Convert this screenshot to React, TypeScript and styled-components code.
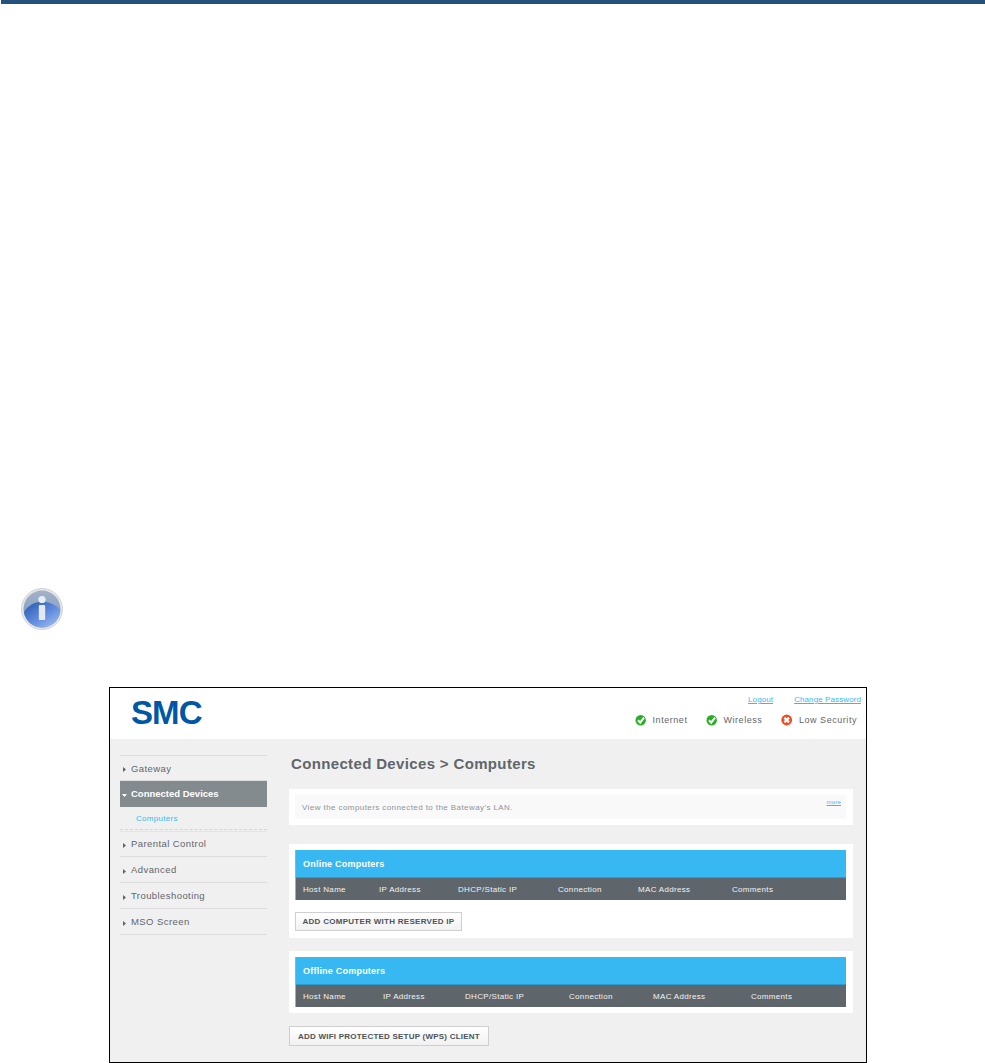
import React from "react";
import styled, { createGlobalStyle } from "styled-components";

const Global = createGlobalStyle`
  html, body { margin: 0; padding: 0; background: #fff; }
  body { font-family: "Liberation Sans", Arial, sans-serif; }
  * { box-sizing: border-box; }
`;

const Page = styled.div`
  width: 985px;
  height: 1063px;
  overflow: hidden;
  background: #fff;
`;
const TopRule = styled.div`
  height: 4px;
  margin-left: 1px;
  background: #25527d;
`;
const NoteIcon = styled.svg`
  display: block;
  width: 44px;
  height: 44px;
  margin: 583px 0 0 20px;
`;
const Frame = styled.div`
  width: 758px;
  height: 376px;
  margin: 56px 0 0 109px;
  border: 1px solid #000;
  background: #f0f0f0;
`;
const Header = styled.header`
  height: 51px;
  background: #fff;
  display: flex;
  justify-content: space-between;
`;
const Logo = styled.div`
  margin: 7px 0 0 21px;
  font-size: 33px;
  line-height: 36px;
  font-weight: 700;
  color: #0057a5;
  letter-spacing: -0.9px;
`;
const HeaderRight = styled.div`
  width: 260px;
  padding: 7px 5px 0 0;
  display: flex;
  flex-direction: column;
  align-items: flex-end;
`;
const Links = styled.div`
  display: flex;
  gap: 21px;
  font-size: 8px;
  line-height: 10px;
  letter-spacing: 0.1px;
`;
const A = styled.a`
  color: #38b8f2;
  text-decoration: underline;
`;
const Statuses = styled.div`
  display: flex;
  margin-top: 9px;
  padding-right: 4px;
  font-size: 9px;
  line-height: 12px;
  letter-spacing: 0.55px;
  color: #5f666b;
  white-space: nowrap;
`;
const Status = styled.div<{ $left: number }>`
  display: flex;
  align-items: center;
  gap: 5.5px;
  margin-left: ${(p) => p.$left}px;
`;
const Body = styled.div`
  display: flex;
`;
const Side = styled.nav`
  width: 147px;
  margin: 16px 0 0 10px;
  border-top: 1px solid #dcdcdc;
  flex: none;
`;
const NavItem = styled.div<{ $active?: boolean; $first?: boolean; $afterSub?: boolean }>`
  height: ${(p) => (p.$first ? "25px" : "26px")};
  display: flex;
  align-items: center;
  padding-left: 2px;
  gap: 4px;
  font-size: 9.5px;
  letter-spacing: ${(p) => (p.$active ? "0" : "0.42px")};
  font-weight: ${(p) => (p.$active ? 700 : 400)};
  color: ${(p) => (p.$active ? "#fff" : "#5f666b")};
  background: ${(p) => (p.$active ? "#848b8f" : "transparent")};
  border-bottom: 1px solid ${(p) => (p.$active ? "transparent" : "#dcdcdc")};
  ${(p) => (p.$afterSub ? "margin-top: 1px; box-shadow: inset 0 1px #e4e4e4;" : "")}
`;
const Arrow = styled.svg`
  width: 5px;
  height: 7px;
  flex: none;
  margin-top: 3px;
`;
const SubItem = styled.div`
  height: 23px;
  padding: 7px 0 0 16px;
  font-size: 8px;
  line-height: 10px;
  letter-spacing: 0.3px;
  color: #38b8f2;
  border-bottom: 1px dashed #d5d5d5;
`;
const Main = styled.main`
  margin-left: 22px;
  width: 565px;
  flex: none;
`;
const Title = styled.h1`
  margin: 15px 0 0 2px;
  font-size: 15px;
  line-height: 20px;
  font-weight: 700;
  letter-spacing: 0.35px;
  color: #5f666b;
`;
const Card = styled.section<{ $top: number; $bottom?: number }>`
  margin-top: ${(p) => p.$top}px;
  width: 564px;
  background: #fff;
  padding: 6px 7px ${(p) => p.$bottom ?? 6}px 6px;
`;
const Intro = styled.div`
  height: 24px;
  padding: 0 7px;
  display: flex;
  align-items: center;
  justify-content: space-between;
  background: #f9f9f9;
  font-size: 8px;
  letter-spacing: 0.42px;
  color: #8f9497;
`;
const More = styled(A)`
  align-self: flex-start;
  margin: 2px -2px 0 0;
  font-size: 6px;
  line-height: 10px;
  letter-spacing: 0.2px;
`;
const TableBox = styled.div`
  border-left: 1px solid #a9adb0;
`;
const TableTitle = styled.div`
  height: 28px;
  padding-left: 7px;
  display: flex;
  align-items: center;
  font-size: 9px;
  font-weight: 700;
  letter-spacing: 0.22px;
  color: #fff;
  background: #38b8f2;
  border-bottom: 1px solid #2e9bcc;
`;
const HeadRow = styled.div<{ $cols: string }>`
  height: 22px;
  padding-left: 7px;
  display: grid;
  grid-template-columns: ${(p) => p.$cols};
  align-items: center;
  font-size: 8px;
  letter-spacing: 0.32px;
  color: #f1f2f2;
  background: #5f666b;
`;
const Btn = styled.div<{ $w: number; $h: number; $mt: number; $ls: number }>`
  width: ${(p) => p.$w}px;
  height: ${(p) => p.$h}px;
  margin-top: ${(p) => p.$mt}px;
  display: flex;
  align-items: center;
  justify-content: center;
  font-size: 8px;
  font-weight: 700;
  letter-spacing: ${(p) => p.$ls}px;
  color: #4d5356;
  white-space: nowrap;
  border: 1px solid #cfcfcf;
  background: linear-gradient(#fff, #f1f1f1);
`;

const Check = () => (
  <svg width="12" height="12" viewBox="0 0 12 12">
    <circle cx="5.7" cy="6.3" r="5.2" fill="#27b024" />
    <path d="M3 6.2 5.2 8.6 9 3.6" fill="none" stroke="#fff" strokeWidth="2" />
  </svg>
);
const Cross = () => (
  <svg width="12" height="12" viewBox="0 0 12 12">
    <circle cx="5.7" cy="6" r="5.4" fill="#ef4b23" />
    <path d="M3.4 3.7 8 8.3M8 3.7 3.4 8.3" fill="none" stroke="#fff" strokeWidth="2.4" />
  </svg>
);
const Right = () => (
  <Arrow viewBox="0 0 5 7"><path d="M1 1 4 3.5 1 6z" fill="#5f666b" /></Arrow>
);
const Down = () => (
  <Arrow viewBox="0 0 5 7"><path d="M0 2 5 2 2.5 5z" fill="#fff" /></Arrow>
);

const Columns = ["Host Name", "IP Address", "DHCP/Static IP", "Connection", "MAC Address", "Comments"];

const Head = ({ title, cols }: { title: string; cols: string }) => (
  <TableBox>
    <TableTitle>{title}</TableTitle>
    <HeadRow $cols={cols}>
      {Columns.map((c) => <span key={c}>{c}</span>)}
    </HeadRow>
  </TableBox>
);

export default function App() {
  return (
    <Page>
      <Global />
      <TopRule />
      <NoteIcon viewBox="0 0 44 44">
        <defs>
          <linearGradient id="ng" x1="0" y1="0" x2="0" y2="1">
            <stop offset="0" stopColor="#a3b3c8" />
            <stop offset="0.55" stopColor="#8aa3c6" />
            <stop offset="1" stopColor="#4a78c4" />
          </linearGradient>
          <linearGradient id="nb" x1="0" y1="0.2" x2="0.7" y2="1">
            <stop offset="0" stopColor="#2f62b8" />
            <stop offset="0.55" stopColor="#5f8bdc" />
            <stop offset="1" stopColor="#94b4ee" />
          </linearGradient>
          <filter id="soft"><feGaussianBlur stdDeviation="0.5" /></filter>
        </defs>
        <g filter="url(#soft)">
          <circle cx="22" cy="22" r="20.5" fill="#e6e6e8" stroke="#d2d4d8" />
          <circle cx="22" cy="22" r="18.5" fill="url(#ng)" />
          <path d="M4 25C9 17 17 14 26 15 32 16 37 19 40.4 23 40 33 32 40.5 22 40.5 12 40.5 5 33 4 25z" fill="url(#nb)" />
          <circle cx="22" cy="12.5" r="3.6" fill="#e9edf4" />
          <rect x="18.8" y="18" width="6.4" height="15" rx="1" fill="#e4e8f0" />
        </g>
      </NoteIcon>
      <Frame>
        <Header>
          <Logo>SMC</Logo>
          <HeaderRight>
            <Links>
              <A>Logout</A>
              <A>Change Password</A>
            </Links>
            <Statuses>
              <Status $left={0}><Check />Internet</Status>
              <Status $left={18.5}><Check />Wireless</Status>
              <Status $left={19}><Cross />Low Security</Status>
            </Statuses>
          </HeaderRight>
        </Header>
        <Body>
          <Side>
            <NavItem $first><Right />Gateway</NavItem>
            <NavItem $active><Down />Connected Devices</NavItem>
            <SubItem>Computers</SubItem>
            <NavItem $afterSub><Right />Parental Control</NavItem>
            <NavItem><Right />Advanced</NavItem>
            <NavItem><Right />Troubleshooting</NavItem>
            <NavItem><Right />MSO Screen</NavItem>
          </Side>
          <Main>
            <Title>Connected Devices &gt; Computers</Title>
            <Card $top={15}>
              <Intro>
                <span>View the computers connected to the Bateway's LAN.</span>
                <More>more</More>
              </Intro>
            </Card>
            <Card $top={19} $bottom={7}>
              <Head title="Online Computers" cols="76px 79px 100px 80px 94px 1fr" />
              <Btn $w={167} $h={19} $mt={12} $ls={0.28}>ADD COMPUTER WITH RESERVED IP</Btn>
            </Card>
            <Card $top={13}>
              <Head title="Offline Computers" cols="80px 82px 104px 84px 98px 1fr" />
            </Card>
            <Btn $w={200} $h={20} $mt={13} $ls={0.22}>ADD WIFI PROTECTED SETUP (WPS) CLIENT</Btn>
          </Main>
        </Body>
      </Frame>
    </Page>
  );
}
